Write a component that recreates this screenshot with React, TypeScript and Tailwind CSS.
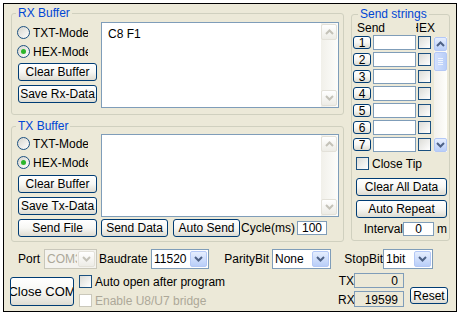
import React from "react";

type P = { children?: React.ReactNode; className?: string };

const Btn = ({ children, className = "" }: P) => (
  <div
    className={`flex shrink-0 items-center justify-center overflow-hidden whitespace-nowrap rounded-[3px] border border-[#003C74] bg-linear-to-b from-white via-[#F7F7F4] to-[#DEDCD2] leading-[14px] text-black ${className}`}
  >
    {children}
  </div>
);

const Chev = ({ up = false, color = "#4D6185" }: { up?: boolean; color?: string }) => (
  <svg width="9" height="6" viewBox="0 0 9 6" className="block">
    <path
      d={up ? "M1 5 L4.5 1.5 L8 5" : "M1 1 L4.5 4.5 L8 1"}
      fill="none"
      stroke={color}
      strokeWidth="2"
    />
  </svg>
);

const BlueArrow = ({ up = false, className = "" }: { up?: boolean; className?: string }) => (
  <div
    className={`flex shrink-0 items-center justify-center rounded-[2px] border border-[#B4C8F6] bg-linear-to-b from-[#E6EEFE] to-[#B9CEF8] ${className}`}
  >
    <Chev up={up} />
  </div>
);

const GrayArrow = ({ up = false, className = "" }: { up?: boolean; className?: string }) => (
  <div
    className={`flex shrink-0 items-center justify-center rounded-[2px] border border-[#E3E1D9] bg-linear-to-b from-white to-[#EDECE6] ${className}`}
  >
    <Chev up={up} color="#C4C2B8" />
  </div>
);

const Radio = ({ checked = false }: { checked?: boolean }) => (
  <div className="flex h-[13px] w-[13px] shrink-0 items-center justify-center rounded-full border border-[#1C5180] bg-linear-to-br from-[#D6D5CE] to-white">
    {checked && <div className="h-[5px] w-[5px] rounded-full bg-[#2BB52B]" />}
  </div>
);

const Check = ({ disabled = false }: { disabled?: boolean }) => (
  <div
    className={
      disabled
        ? "h-[13px] w-[13px] shrink-0 border border-[#CAC8BB] bg-white"
        : "h-[13px] w-[13px] shrink-0 border border-[#1C5180] bg-linear-to-br from-[#DCDCD7] to-white"
    }
  />
);

const RadioRow = ({ label, checked = false, className = "" }: { label: string; checked?: boolean; className?: string }) => (
  <div className={`flex h-[13px] w-[71px] items-center gap-[3px] overflow-hidden whitespace-nowrap ${className}`}>
    <Radio checked={checked} />
    <span className="shrink-0">{label}</span>
  </div>
);

const TextArea = ({ className = "", text = "" }: { className?: string; text?: string }) => (
  <div className={`flex shrink-0 border border-[#7F9DB9] bg-white ${className}`}>
    <div className="flex-1 pl-[6px] pt-[4px]">{text}</div>
    <div className="flex w-[17px] flex-col justify-between bg-linear-to-r from-[#F1F0EA] to-[#FDFDFB] py-[1px]">
      <GrayArrow up className="h-[16px] w-[16px]" />
      <GrayArrow className="h-[16px] w-[16px]" />
    </div>
  </div>
);

const Combo = ({ text, className = "", disabled = false }: { text: string; className?: string; disabled?: boolean }) => (
  <div
    className={`flex h-[20px] shrink-0 items-center border ${
      disabled ? "border-[#C9C7BA] bg-[#F4F3EE] text-[#ACA899]" : "border-[#7F9DB9] bg-white"
    } ${className}`}
  >
    <div className="min-w-0 flex-1 overflow-hidden whitespace-nowrap pl-[2px]">{text}</div>
    {disabled ? (
      <GrayArrow className="m-[1px] h-[16px] w-[17px]" />
    ) : (
      <BlueArrow className="m-[1px] h-[16px] w-[17px]" />
    )}
  </div>
);

const Group = ({ title, titleLeft, className = "", children }: { title: string; titleLeft: string; className?: string; children?: React.ReactNode }) => (
  <div className={`relative shrink-0 rounded-[3px] border border-[#D0D0BF] ${className}`}>
    <span className={`absolute -top-[8px] whitespace-nowrap bg-[#ECE9D8] px-[2px] leading-[14px] text-[#0046D5] ${titleLeft}`}>
      {title}
    </span>
    {children}
  </div>
);

const SendRow = ({ n }: { n: number }) => (
  <div className="flex h-[15px] items-center">
    <Btn className="h-[13px] w-[18px]">{n}</Btn>
    <div className="ml-[2px] h-[15px] w-[43px] border border-[#7F9DB9] bg-white" />
    <div className="ml-[2px]">
      <Check />
    </div>
  </div>
);

export default function App() {
  return (
    <div className="h-[315px] w-[458px] bg-white pl-[3px] pt-[3px] font-['Liberation_Sans',Arial,sans-serif] text-[12px] leading-[14px] text-black">
      <div className="h-[309px] w-[454px] overflow-hidden border border-black bg-[#ECE9D8]">
        {/* top section */}
        <div className="ml-[7px] mt-[9px] flex items-start">
          <div className="flex flex-col">
            {/* RX Buffer */}
            <Group title="RX Buffer" titleLeft="left-[4px]" className="h-[102px] w-[333px]">
              <div className="flex items-start pl-[5px]">
                <div className="flex w-[84px] shrink-0 flex-col pt-[12px]">
                  <RadioRow label="TXT-Mode" />
                  <RadioRow label="HEX-Mode" checked className="mt-[6px]" />
                  <Btn className="ml-[1px] mt-[5px] h-[18px] w-[79px]">Clear Buffer</Btn>
                  <Btn className="ml-[1px] mt-[4px] h-[18px] w-[79px]">Save Rx-Data</Btn>
                </div>
                <TextArea className="mt-[8px] h-[86px] w-[238px]" text="C8 F1" />
              </div>
            </Group>
            {/* TX Buffer */}
            <Group title="TX Buffer" titleLeft="left-[4px]" className="mt-[11px] h-[116px] w-[333px]">
              <div className="flex flex-col pl-[5px]">
                <div className="flex items-start">
                  <div className="flex w-[84px] shrink-0 flex-col pt-[10px]">
                    <RadioRow label="TXT-Mode" />
                    <RadioRow label="HEX-Mode" checked className="mt-[6px]" />
                    <Btn className="ml-[1px] mt-[6px] h-[18px] w-[79px]">Clear Buffer</Btn>
                    <Btn className="ml-[1px] mt-[4px] h-[18px] w-[79px]">Save Tx-Data</Btn>
                  </div>
                  <TextArea className="mt-[7px] h-[83px] w-[238px]" />
                </div>
                <div className="mt-[2px] flex items-center">
                  <Btn className="ml-[1px] h-[18px] w-[79px]">Send File</Btn>
                  <Btn className="ml-[4px] h-[18px] w-[67px]">Send Data</Btn>
                  <Btn className="ml-[5px] h-[18px] w-[67px]">Auto Send</Btn>
                  <span className="w-[57px] shrink-0 whitespace-nowrap pl-[1px]">Cycle(ms)</span>
                  <div className="h-[14px] w-[30px] shrink-0 border border-[#7F9DB9] bg-white text-center leading-[13px]">
                    100
                  </div>
                </div>
              </div>
            </Group>
          </div>
          {/* Send strings */}
          <Group title="Send strings" titleLeft="left-[6px]" className="ml-[7px] mt-[1px] h-[227px] w-[99px]">
            <div className="flex flex-col">
              <div className="mt-[6px] flex h-[14px]">
                <span className="ml-[5px] w-[59px] shrink-0">Send</span>
                <div className="flex w-[19px] shrink-0 justify-end overflow-hidden">
                  <span className="shrink-0">HEX</span>
                </div>
              </div>
              <div className="flex items-start">
                <div className="ml-[1px] flex flex-col gap-[2px]">
                  {[1, 2, 3, 4, 5, 6, 7].map((n) => (
                    <SendRow key={n} n={n} />
                  ))}
                </div>
                <div className="ml-[3px] mt-[2px] flex h-[115px] w-[13px] flex-col bg-linear-to-r from-[#F3F1EC] to-[#FEFEFB]">
                  <BlueArrow up className="h-[14px] w-[13px]" />
                  <div className="mt-[1px] flex h-[19px] w-[13px] flex-col items-center justify-center gap-[1px] rounded-[2px] border border-[#B4C8F6] bg-linear-to-r from-[#D3E0FD] to-[#B9CEF8]">
                    <div className="h-[1px] w-[5px] bg-[#EEF4FE]" />
                    <div className="h-[1px] w-[5px] bg-[#EEF4FE]" />
                    <div className="h-[1px] w-[5px] bg-[#EEF4FE]" />
                    <div className="h-[1px] w-[5px] bg-[#EEF4FE]" />
                  </div>
                  <div className="flex-1" />
                  <BlueArrow className="h-[14px] w-[13px]" />
                </div>
              </div>
              <div className="ml-[4px] mt-[5px] flex h-[13px] items-center gap-[3px] whitespace-nowrap">
                <Check />
                <span>Close Tip</span>
              </div>
              <Btn className="ml-[4px] mt-[8px] h-[18px] w-[91px]">Clear All Data</Btn>
              <Btn className="ml-[4px] mt-[4px] h-[18px] w-[91px]">Auto Repeat</Btn>
              <div className="ml-[4px] mt-[4px] flex h-[14px] items-center">
                <span className="w-[47px] shrink-0 text-right">Interval</span>
                <div className="h-[14px] w-[31px] shrink-0 border border-[#7F9DB9] bg-white text-center leading-[13px]">
                  0
                </div>
                <span className="ml-[3px]">m</span>
              </div>
            </div>
          </Group>
        </div>

        {/* bottom row 1 */}
        <div className="mt-[7px] flex h-[20px] items-center whitespace-nowrap">
          <span className="ml-[14px] w-[26px] shrink-0">Port</span>
          <Combo text="COM3" disabled className="w-[53px]" />
          <span className="w-[54px] shrink-0 pl-[2px]">Baudrate</span>
          <Combo text="11520" className="w-[58px]" />
          <span className="w-[63px] shrink-0 pr-[3px] text-right">ParityBit</span>
          <Combo text="None" className="w-[59px]" />
          <span className="w-[52px] shrink-0 text-right">StopBit</span>
          <Combo text="1bit" className="w-[50px]" />
        </div>

        {/* bottom row 2 */}
        <div className="mt-[4px] flex items-start whitespace-nowrap">
          <Btn className="ml-[6px] mt-[4px] h-[29px] w-[64px] text-[13px]">Close COM</Btn>
          <div className="ml-[5px] mt-[2px] flex w-[259px] shrink-0 flex-col">
            <div className="flex h-[13px] items-center gap-[3px]">
              <Check />
              <span>Auto open after program</span>
            </div>
            <div className="mt-[6px] flex h-[13px] items-center gap-[3px] text-[#ACA899]">
              <Check disabled />
              <span>Enable U8/U7 bridge</span>
            </div>
          </div>
          <div className="flex shrink-0 flex-col">
            <div className="flex items-start">
              <span className="w-[16px] pt-[1px] text-right">TX</span>
              <div className="flex h-[15px] w-[50px] justify-end border border-[#7F9DB9] bg-[#ECE9D8] pr-[5px] leading-[14px]">
                0
              </div>
            </div>
            <div className="mt-[3px] flex items-start">
              <span className="w-[16px] pt-[2px] text-right">RX</span>
              <div className="flex h-[16px] w-[50px] justify-end border border-[#7F9DB9] bg-[#ECE9D8] pr-[5px] pt-[1px] leading-[14px]">
                19599
              </div>
            </div>
          </div>
          <Btn className="ml-[6px] mt-[14px] h-[17px] w-[38px]">Reset</Btn>
        </div>
      </div>
    </div>
  );
}
